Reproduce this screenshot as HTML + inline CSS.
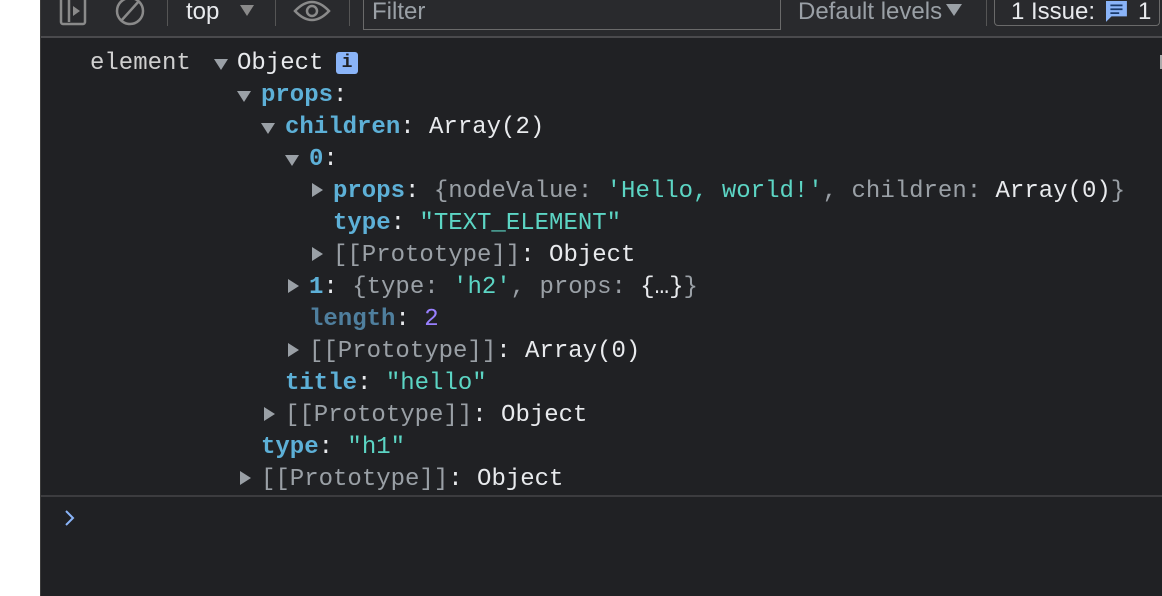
<!DOCTYPE html>
<html><head><meta charset="utf-8"><style>
html,body{margin:0;padding:0;width:1162px;height:596px;overflow:hidden;background:#fff;}
#p{position:absolute;left:40px;top:0;width:1122px;height:596px;background:#202124;border-left:1px solid #3c3c3c;}
#tb{position:absolute;left:0;top:0;width:1122px;height:36px;background:#292a2d;border-bottom:2px solid #4a4a4d;font-family:"Liberation Sans",sans-serif;font-size:24px;color:#e8eaed;}
.t{position:absolute;top:-1px;line-height:26px;}
.sep{position:absolute;top:0;width:1px;height:26px;background:#555;}
.l{position:absolute;height:32px;line-height:32px;font-family:"Liberation Mono",monospace;font-size:24px;color:#e8eaed;white-space:pre;}
.k{color:#5db0d7;font-weight:bold;}
.kd{color:#4f7f9e;font-weight:bold;}
.s{color:#5cd5c4;}
.n{color:#9980ff;}
.g{color:#9aa0a6;}
.ar{position:absolute;border-top:7px solid transparent;border-bottom:7px solid transparent;border-left:11px solid #9aa0a6;width:0;height:0;}
.ad{position:absolute;border-left:7px solid transparent;border-right:7px solid transparent;border-top:11px solid #9aa0a6;width:0;height:0;}
</style></head><body>
<div id="p">
<div id="tb">
 <svg style="position:absolute;left:16px;top:0" width="32" height="26" viewBox="0 0 32 26"><rect x="4" y="-2" width="24" height="26" rx="2" fill="none" stroke="#8a8a8a" stroke-width="2.5"/><line x1="12" y1="0" x2="12" y2="22" stroke="#8a8a8a" stroke-width="2.5"/><path d="M16 6 L23 11 L16 16Z" fill="#8a8a8a"/></svg>
 <svg style="position:absolute;left:72px;top:0" width="34" height="28" viewBox="0 0 34 28"><circle cx="17" cy="11" r="13" fill="none" stroke="#8a8a8a" stroke-width="2.5"/><line x1="8" y1="21" x2="26" y2="1" stroke="#8a8a8a" stroke-width="2.5"/></svg>
 <div class="sep" style="left:126px"></div>
 <span class="t" style="left:145px">top</span>
 <div class="ad" style="left:199px;top:5px;border-top-color:#8a8a8a"></div>
 <div class="sep" style="left:234px"></div>
 <svg style="position:absolute;left:252px;top:0" width="38" height="26" viewBox="0 0 38 26"><path d="M2 11 Q19 -7 36 11 Q19 29 2 11Z" fill="none" stroke="#8a8a8a" stroke-width="2.5"/><circle cx="19" cy="11" r="5" fill="none" stroke="#8a8a8a" stroke-width="2.5"/></svg>
 <div class="sep" style="left:308px"></div>
 <div style="position:absolute;left:322px;top:-2px;width:416px;height:31px;border:1px solid #6a6a6a;border-top:none;"></div>
 <span class="t" style="left:331px;color:#9aa0a6">Filter</span>
 <span class="t" style="left:757px;color:#9aa0a6">Default levels</span>
 <div class="ad" style="left:905px;top:4px;border-top-color:#9aa0a6;border-left-width:8px;border-right-width:8px;border-top-width:12px"></div>
 <div class="sep" style="left:945px"></div>
 <div style="position:absolute;left:953px;top:-2px;width:164px;height:27px;border:1px solid #6a6a6a;border-top:none;border-radius:0 0 4px 4px;"></div>
 <span class="t" style="left:970px">1 Issue:</span>
 <svg style="position:absolute;left:1065px;top:1px" width="22" height="22" viewBox="0 0 20 20"><path d="M0 0H19V14H5L0 19Z" fill="#8ab4f8"/><path d="M4 4H15M4 7.5H15M4 11H12" stroke="#1a3a6a" stroke-width="1.6"/></svg>
 <span class="t" style="left:1097px">1</span>
</div>

<div class="l" style="left:49px;top:48px;color:#d0d0d0">element</div>
<div class="ad" style="left:173px;top:59px"></div>
<div class="l" style="left:196px;top:48px">Object</div>
<div style="position:absolute;left:295px;top:52px;width:22px;height:22px;background:#8ab4f8;border-radius:3px;color:#202124;font:bold 18px 'Liberation Mono',monospace;text-align:center;line-height:22px;">i</div>

<div class="ad" style="left:196px;top:91px"></div>
<div class="l" style="left:220px;top:80px"><span class="k">props</span>:</div>
<div class="ad" style="left:220px;top:123px"></div>
<div class="l" style="left:244px;top:112px"><span class="k">children</span>: Array(2)</div>
<div class="ad" style="left:244px;top:155px"></div>
<div class="l" style="left:268px;top:144px"><span class="k">0</span>:</div>
<div class="ar" style="left:271px;top:183px"></div>
<div class="l" style="left:292px;top:176px"><span class="k">props</span>: <span class="g">{nodeValue: </span><span class="s">'Hello, world!'</span><span class="g">, children: </span>Array(0)<span class="g">}</span></div>
<div class="l" style="left:292px;top:208px"><span class="k">type</span>: <span class="s">"TEXT_ELEMENT"</span></div>
<div class="ar" style="left:271px;top:247px"></div>
<div class="l" style="left:292px;top:240px"><span class="g">[[Prototype]]</span>: Object</div>
<div class="ar" style="left:247px;top:279px"></div>
<div class="l" style="left:268px;top:272px"><span class="k">1</span>: <span class="g">{type: </span><span class="s">'h2'</span><span class="g">, props: </span>{…}<span class="g">}</span></div>
<div class="l" style="left:268px;top:304px"><span class="kd">length</span>: <span class="n">2</span></div>
<div class="ar" style="left:247px;top:343px"></div>
<div class="l" style="left:268px;top:336px"><span class="g">[[Prototype]]</span>: Array(0)</div>
<div class="l" style="left:244px;top:368px"><span class="k">title</span>: <span class="s">"hello"</span></div>
<div class="ar" style="left:223px;top:407px"></div>
<div class="l" style="left:244px;top:400px"><span class="g">[[Prototype]]</span>: Object</div>
<div class="l" style="left:220px;top:432px"><span class="k">type</span>: <span class="s">"h1"</span></div>
<div class="ar" style="left:199px;top:471px"></div>
<div class="l" style="left:220px;top:464px"><span class="g">[[Prototype]]</span>: Object</div>

<div style="position:absolute;left:0;top:495px;width:1122px;height:2px;background:#3c3c3f"></div>
<svg style="position:absolute;left:23px;top:509px" width="12" height="18" viewBox="0 0 12 18"><path d="M2 2L9 9L2 16" fill="none" stroke="#8ab4f8" stroke-width="2"/></svg>
<div style="position:absolute;left:1119px;top:55px;width:3px;height:14px;background:#aaa"></div>
</div>
</body></html>
